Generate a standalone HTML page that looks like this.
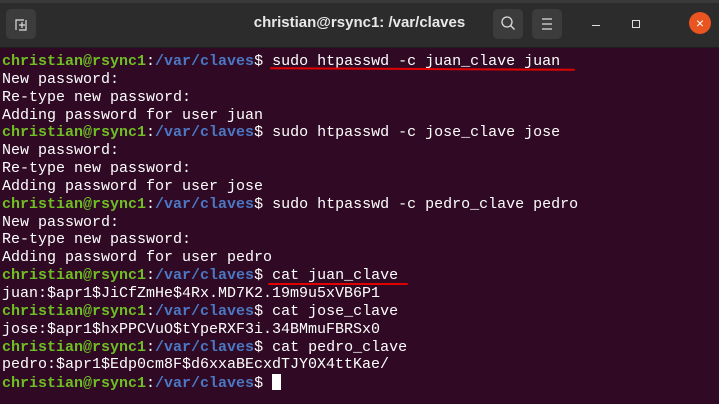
<!DOCTYPE html>
<html><head><style>
body{margin:0;width:719px;height:404px;background:#300a24;overflow:hidden;position:relative;font-family:"Liberation Sans",sans-serif}
.bar{position:absolute;left:0;top:0;width:719px;height:47px;background:#2c2c2c;border-bottom:1px solid #1e1e1e}
.bar .top{position:absolute;top:0;left:0;right:0;height:3px;background:#3a3a3a}
.title{position:absolute;top:14px;width:719px;text-align:center;color:#e8e8e8;font-weight:bold;font-size:15px}
.btn{position:absolute;top:9px;width:30px;height:30px;background:#3c3c3c;border-radius:5px}
pre{position:absolute;left:2px;top:53px;margin:0;font-family:"Liberation Mono",monospace;font-size:15px;line-height:17.85px;color:#ffffff}
.g{font-weight:bold;color:#6fbf24}
.b{font-weight:bold;color:#4a78c4}
.u{position:absolute;height:2px;background:#e00000;border-radius:1px}
.cur{display:inline-block;width:9px;height:16px;background:#fff;vertical-align:-3px}
</style></head><body>
<div class="bar"><div class="top"></div>
<div class="btn" style="left:6px"><svg width="30" height="30"><path d="M10 21V11h8M13 21h7V11" stroke="#ddd" fill="none" stroke-width="1.2"/><path d="M16 13v6M13 16h6" stroke="#ddd" stroke-width="1.2"/></svg></div>
<div class="title">christian@rsync1: /var/claves</div>
<div class="btn" style="left:493px"><svg width="30" height="30"><circle cx="14" cy="13" r="5" stroke="#ddd" fill="none" stroke-width="1.3"/><path d="M17.5 16.5l4 4" stroke="#ddd" stroke-width="1.3"/></svg></div>
<div class="btn" style="left:532px"><svg width="30" height="30"><path d="M10 10h10M10 15h10M10 20h10" stroke="#ddd" stroke-width="1.2"/></svg></div>
<div style="position:absolute;left:592px;top:25px;width:8px;height:1px;background:#ddd"></div>
<div style="position:absolute;left:632px;top:20px;width:6px;height:6px;border:1px solid #ddd"></div>
<div style="position:absolute;left:689px;top:12px;width:22px;height:22px;border-radius:50%;background:#e95420;color:#fff;text-align:center;font-size:14px;line-height:22px">×</div>
</div>
<pre><span class="g">christian@rsync1</span>:<span class="b">/var/claves</span>$ sudo htpasswd -c juan_clave juan
New password:
Re-type new password:
Adding password for user juan
<span class="g">christian@rsync1</span>:<span class="b">/var/claves</span>$ sudo htpasswd -c jose_clave jose
New password:
Re-type new password:
Adding password for user jose
<span class="g">christian@rsync1</span>:<span class="b">/var/claves</span>$ sudo htpasswd -c pedro_clave pedro
New password:
Re-type new password:
Adding password for user pedro
<span class="g">christian@rsync1</span>:<span class="b">/var/claves</span>$ cat juan_clave
juan:$apr1$JiCfZmHe$4Rx.MD7K2.19m9u5xVB6P1
<span class="g">christian@rsync1</span>:<span class="b">/var/claves</span>$ cat jose_clave
jose:$apr1$hxPPCVuO$tYpeRXF3i.34BMmuFBRSx0
<span class="g">christian@rsync1</span>:<span class="b">/var/claves</span>$ cat pedro_clave
pedro:$apr1$Edp0cm8F$d6xxaBEcxdTJY0X4ttKae/
<span class="g">christian@rsync1</span>:<span class="b">/var/claves</span>$ <span class="cur"></span></pre>
<div class="u" style="left:270px;top:68px;width:305px;transform:rotate(0.3deg)"></div>
<div class="u" style="left:268px;top:283px;width:140px"></div>
</body></html>
